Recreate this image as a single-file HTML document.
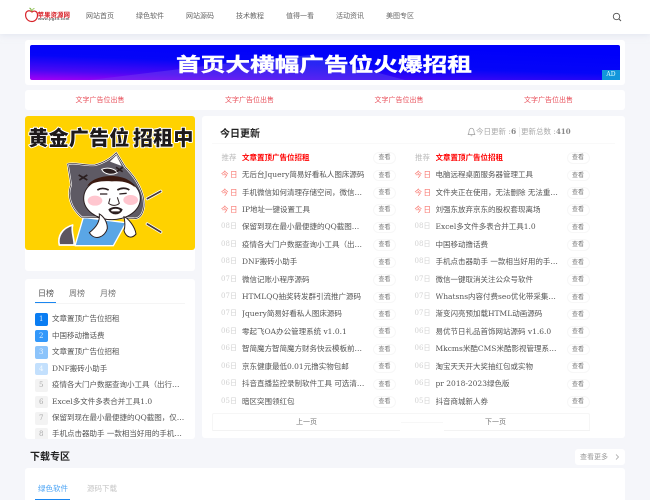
<!DOCTYPE html>
<html lang="zh">
<head>
<meta charset="utf-8">
<title>今日更新</title>
<style>
*{margin:0;padding:0;box-sizing:border-box}
html,body{width:650px;height:500px;overflow:hidden;background:#f5f6fa}
body{position:relative;font-family:"DejaVu Serif","WenQuanYi Zen Hei","Noto Sans CJK SC",serif;font-size:7.5px;color:#555}
.a{position:absolute;white-space:nowrap}
.card{position:absolute;background:#fff;border-radius:3px}
.nav{position:absolute;top:11px;width:28px;line-height:11px;font-size:7px;color:#666;white-space:nowrap}
.ad{position:absolute;top:95px;font-size:7px;line-height:10px;color:#e8505b;width:50px;text-align:center;white-space:nowrap}
.r{position:absolute;height:17.45px;width:180px;line-height:17px}
.r i{position:absolute;left:0;width:16px;text-align:center;font-style:normal;font-size:7px;color:#d2d2d2;white-space:nowrap}
.r i.t{color:#f8746c;letter-spacing:1.5px;font-size:7.5px}
.r i.p{color:#bbb;font-size:7.5px}
.r b{position:absolute;left:21px;width:124.500px;font-weight:400;font-size:7.5px;color:#555;white-space:nowrap;overflow:hidden;text-overflow:ellipsis}
.r b.h{color:#f00;font-weight:700}
.r u{position:absolute;left:152px;top:3.500px;width:23px;height:11.500px;border:1px solid #f7f7f7;border-radius:6px;text-align:center;text-decoration:none;font-size:6px;line-height:9.500px;color:#777;background:#fff}
.k{position:absolute;left:35px;width:150px;height:13px;line-height:12px;font-size:7.5px;color:#555}
.k em{position:absolute;left:0;top:0;width:12.5px;height:12.5px;border-radius:2px;text-align:center;font-style:normal;font-size:7px;line-height:12.5px;color:#aaa;background:#f3f3f3}
.k span{position:absolute;left:17px;width:133px;white-space:nowrap;overflow:hidden;text-overflow:ellipsis}
.s{position:absolute;top:127px;font-size:7.500px;line-height:10px;color:#aaa;white-space:nowrap}
</style>
</head>
<body>
<div class="a" style="left:0;top:0;width:650px;height:34px;background:#fff;box-shadow:0 1px 6px rgba(210,215,230,.55)"></div>
<svg class="a" style="left:24px;top:6px" width="16" height="17" viewBox="0 0 16 17"><path d="M8 6C5 3.500 1.600 5 1.600 9c0 4 3 6.500 6.200 6.500S13.500 13 13.500 9C13.500 5.500 10.500 4 8 6Z" fill="#fff" stroke="#d8232a" stroke-width="1.200"/><path d="M7.500 5.500C7.500 4 6.500 2.500 5.500 2" fill="none" stroke="#7cb342" stroke-width="1"/><path d="M8 5C8.500 3.500 9.500 2.500 10.500 2.500" fill="none" stroke="#9ccc65" stroke-width="1"/></svg>
<div class="a" style="left:37.500px;top:10px;font:700 6.500px/8px 'Noto Sans CJK SC',sans-serif;color:#d8232a">苹果资源网</div>
<div class="a" style="left:38px;top:16px;font:700 4px/5px 'Liberation Sans',sans-serif;color:#666;letter-spacing:.2px">www.pgzlt.com</div>
<div class="nav" style="left:86px">网站首页</div>
<div class="nav" style="left:136px">绿色软件</div>
<div class="nav" style="left:186px">网站源码</div>
<div class="nav" style="left:236px">技术教程</div>
<div class="nav" style="left:286px">值得一看</div>
<div class="nav" style="left:336px">活动资讯</div>
<div class="nav" style="left:386px">美图专区</div>
<svg class="a" style="left:612px;top:12px" width="10" height="10" viewBox="0 0 10 10"><circle cx="4.500" cy="4.500" r="3.200" fill="none" stroke="#555" stroke-width=".9"/><path d="M7 7L9 9" stroke="#555" stroke-width="1"/></svg>

<div class="card" style="left:25px;top:40px;width:600px;height:45px"></div>
<svg class="a" style="left:30px;top:45px;border-radius:2px" width="590" height="35" viewBox="0 0 590 35">
<defs><linearGradient id="g" x1="0" y1="1" x2=".55" y2="0"><stop offset="0" stop-color="#a400f4"/><stop offset=".22" stop-color="#4a08f4"/><stop offset=".55" stop-color="#0505f8"/><stop offset="1" stop-color="#0000fa"/></linearGradient>
<linearGradient id="g2" x1="0" y1="1" x2="1" y2="0"><stop offset="0" stop-color="#7a30f0" stop-opacity=".55"/><stop offset="1" stop-color="#3048f0" stop-opacity=".55"/></linearGradient></defs>
<rect width="590" height="35" fill="url(#g)"/>
<path d="M60 35L200 18L280 10L345 27L375 35Z" fill="url(#g2)"/>
</svg>
<div class="a" style="left:176px;top:52px;font:700 19px/23px 'Noto Sans CJK SC','Liberation Sans',sans-serif;color:#fff;transform-origin:0 0;transform:scaleX(1.298);-webkit-text-stroke:.4px #fff">首页大横幅广告位火爆招租</div>
<div class="a" style="left:602px;top:70px;width:18px;height:10px;background:#1296db;color:#dff;font-size:6px;line-height:10px;text-align:center">AD</div>

<div class="card" style="left:25px;top:90px;width:600px;height:20px"></div>
<div class="ad" style="left:75px">文字广告位出售</div>
<div class="ad" style="left:224.500px">文字广告位出售</div>
<div class="ad" style="left:374px">文字广告位出售</div>
<div class="ad" style="left:523.500px">文字广告位出售</div>

<div class="card" style="left:25px;top:116px;width:170px;height:155px"></div>
<svg class="a" style="left:25px;top:116px;border-radius:3px" width="170" height="134" viewBox="75 18 510 402">
<rect x="75" y="18" width="510" height="402" fill="#ffd200"/>
<g font-family="'Noto Sans CJK SC',sans-serif" font-weight="900" font-size="60" fill="#1e1a1a" stroke="#fff" stroke-width="6" paint-order="stroke" stroke-linejoin="round">
<text x="85" y="105" textLength="303">黄金广告位</text>
<text x="399" y="105" textLength="181">招租中</text>
</g>
<path d="M178 405C172 380 185 355 218 345C212 365 225 390 222 405Z" fill="#5c5660" stroke="#fff" stroke-width="5" stroke-linejoin="round"/>
<path d="M225 407L250 322L378 338L340 407Z" fill="#5aa6e6" stroke="#fff" stroke-width="4" stroke-linejoin="round"/>
<path d="M203 162C225 156 255 168 285 165C305 160 330 148 349 128L376 172C410 205 435 250 432 290C428 318 415 328 400 325L245 322C212 295 200 255 213 225Z" fill="#5e5a64" stroke="#fff" stroke-width="6" stroke-linejoin="round"/>
<path d="M203 162C225 156 255 168 285 165C305 160 330 148 349 128L376 172C410 205 435 250 432 290C428 318 415 328 400 325L245 322C212 295 200 255 213 225Z" fill="none" stroke="#2b1f20" stroke-width="2"/>
<path d="M330 155L349 136L365 168Z" fill="#fff"/>
<path d="M305 178C322 170 345 176 352 188C335 197 312 193 305 178Z" fill="#2b1f20" stroke="#fff" stroke-width="3"/>
<path d="M236 195L262 210M262 195L238 210M348 172L368 185M368 172L350 185" stroke="#2b1f20" stroke-width="5"/>
<ellipse cx="336" cy="265" rx="85" ry="64" fill="#fff" stroke="#2b1f20" stroke-width="3"/>
<path d="M262 228C282 190 385 185 405 232C380 212 358 213 335 214C305 212 285 215 262 228Z" fill="#3c1a10"/>
<ellipse cx="285" cy="272" rx="22" ry="15" fill="#ffc6cf"/>
<ellipse cx="392" cy="270" rx="22" ry="15" fill="#ffc6cf"/>
<path d="M292 240C305 232 318 236 326 240M352 240C362 234 378 232 388 240" stroke="#2b1f20" stroke-width="5" fill="none"/>
<path d="M300 252L322 252M358 252L380 250" stroke="#2b1f20" stroke-width="4"/>
<path d="M330 265L326 280C336 288 350 288 358 280L352 262" stroke="#2b1f20" stroke-width="3" fill="none"/>
<path d="M325 298C338 288 355 288 368 298C362 318 332 318 325 298Z" fill="#2b1f20"/>
<path d="M333 300C342 295 352 295 360 300L358 304L335 304Z" fill="#fff"/>
<path d="M268 368C290 350 300 335 298 312C310 318 322 335 322 355C316 380 285 395 268 368Z" fill="#fff" stroke="#2b1f20" stroke-width="3"/>
<path d="M372 320C385 325 405 350 408 372C395 388 378 382 372 362C376 350 375 335 372 320Z" fill="#fff" stroke="#2b1f20" stroke-width="3"/>
<path d="M442 266L482 244M442 342L482 366" stroke="#fff" stroke-width="10" stroke-linecap="round"/>
<path d="M442 266L482 244M442 342L482 366" stroke="#4a3a38" stroke-width="5" stroke-linecap="round"/>
</svg>

<div class="card" style="left:25px;top:278.500px;width:170px;height:160.500px;overflow:hidden">
<div class="a" style="left:13px;top:9px;font-size:8px;line-height:11px;color:#555">日榜</div>
<div class="a" style="left:44px;top:9px;font-size:8px;line-height:11px;color:#777">周榜</div>
<div class="a" style="left:75px;top:9px;font-size:8px;line-height:11px;color:#777">月榜</div>
<div class="a" style="left:10px;top:24px;width:150px;height:1px;background:#f5f5f5"></div>
<div class="a" style="left:10px;top:23.500px;width:21px;height:1px;background:#1a86f0"></div>
</div>
<div class="k" style="top:313px"><em style="background:#0a7df2;color:#cfe6ff">1</em><span>文章置顶广告位招租</span></div>
<div class="k" style="top:329.500px"><em style="background:#3398fa;color:#d8ecff">2</em><span>中国移动撸话费</span></div>
<div class="k" style="top:346px"><em style="background:#8cc4fb;color:#e6f2ff">3</em><span>文章置顶广告位招租</span></div>
<div class="k" style="top:362.500px"><em style="background:#c3e0fd;color:#f4faff">4</em><span>DNF搬砖小助手</span></div>
<div class="k" style="top:379px"><em>5</em><span>疫情各大门户数据查询小工具（出行防疫必备）</span></div>
<div class="k" style="top:395.500px"><em>6</em><span>Excel多文件多表合并工具1.0</span></div>
<div class="k" style="top:412px"><em>7</em><span>保留到现在最小最便捷的QQ截图，仅支持截图</span></div>
<div class="k" style="top:428px;height:11px;overflow:hidden"><em>8</em><span>手机点击器助手 一款相当好用的手机点击工具</span></div>

<div class="card" style="left:202px;top:116px;width:423px;height:322px"></div>
<div class="a" style="left:220px;top:126px;font-weight:700;font-size:10px;line-height:13px;color:#222;font-family:'WenQuanYi Zen Hei','Noto Sans CJK SC',sans-serif">今日更新</div>
<svg class="a" style="left:467px;top:127px" width="9" height="10" viewBox="0 0 9 10"><path d="M1.200 7.500C2 6.500 2 5.500 2 4.500C2 2.800 3 1.200 4.500 1.200S7 2.800 7 4.500C7 5.500 7 6.500 7.800 7.500ZM3.700 8.800H5.300" fill="none" stroke="#999" stroke-width=".7"/></svg>
<div class="s" style="left:476px">今日更新 :</div>
<div class="s" style="left:511px;color:#888;font-weight:700">6</div>
<div class="a" style="left:518.500px;top:127px;width:1px;height:10px;background:#eee"></div>
<div class="s" style="left:521px">更新总数 :</div>
<div class="s" style="left:556px;color:#888;font-weight:700;font-size:7px">410</div>
<div class="a" style="left:212px;top:143px;width:403px;height:1px;background:#f9f9f9"></div>

<div class="r" style="left:221px;top:148.500px"><i class="p">推荐</i><b class="h">文章置顶广告位招租</b><u>查看</u></div>
<div class="r" style="left:221px;top:166px"><i class="t">今日</i><b>无后台Jquery简易好看私人图床源码</b><u>查看</u></div>
<div class="r" style="left:221px;top:183.500px"><i class="t">今日</i><b>手机微信如何清理存储空间，微信清理工具</b><u>查看</u></div>
<div class="r" style="left:221px;top:200.900px"><i class="t">今日</i><b>IP地址一键设置工具</b><u>查看</u></div>
<div class="r" style="left:221px;top:218.300px"><i>08日</i><b>保留到现在最小最便捷的QQ截图工具</b><u>查看</u></div>
<div class="r" style="left:221px;top:235.700px"><i>08日</i><b>疫情各大门户数据查询小工具（出行防疫）</b><u>查看</u></div>
<div class="r" style="left:221px;top:253px"><i>08日</i><b>DNF搬砖小助手</b><u>查看</u></div>
<div class="r" style="left:221px;top:270.500px"><i>07日</i><b>微信记账小程序源码</b><u>查看</u></div>
<div class="r" style="left:221px;top:288px"><i>07日</i><b>HTMLQQ抽奖转发群引流推广源码</b><u>查看</u></div>
<div class="r" style="left:221px;top:305.400px"><i>07日</i><b>Jquery简易好看私人图床源码</b><u>查看</u></div>
<div class="r" style="left:221px;top:322.800px"><i>06日</i><b>零起飞OA办公管理系统 v1.0.1</b><u>查看</u></div>
<div class="r" style="left:221px;top:340.300px"><i>06日</i><b>智简魔方智简魔方财务快云模板前端源码</b><u>查看</u></div>
<div class="r" style="left:221px;top:357.700px"><i>06日</i><b>京东健康最低0.01元撸实物包邮</b><u>查看</u></div>
<div class="r" style="left:221px;top:375.100px"><i>06日</i><b>抖音直播监控录制软件工具 可选清晰度下载</b><u>查看</u></div>
<div class="r" style="left:221px;top:392.600px"><i>05日</i><b>暗区突围领红包</b><u>查看</u></div>

<div class="r" style="left:414.500px;top:148.500px"><i class="p">推荐</i><b class="h">文章置顶广告位招租</b><u>查看</u></div>
<div class="r" style="left:414.500px;top:166px"><i class="t">今日</i><b>电脑远程桌面服务器管理工具</b><u>查看</u></div>
<div class="r" style="left:414.500px;top:183.500px"><i class="t">今日</i><b>文件夹正在使用，无法删除 无法重命名工具</b><u>查看</u></div>
<div class="r" style="left:414.500px;top:200.900px"><i class="t">今日</i><b>刘强东放弃京东的股权套现离场</b><u>查看</u></div>
<div class="r" style="left:414.500px;top:218.300px"><i>08日</i><b>Excel多文件多表合并工具1.0</b><u>查看</u></div>
<div class="r" style="left:414.500px;top:235.700px"><i>08日</i><b>中国移动撸话费</b><u>查看</u></div>
<div class="r" style="left:414.500px;top:253px"><i>08日</i><b>手机点击器助手 一款相当好用的手机工具</b><u>查看</u></div>
<div class="r" style="left:414.500px;top:270.500px"><i>07日</i><b>微信一键取消关注公众号软件</b><u>查看</u></div>
<div class="r" style="left:414.500px;top:288px"><i>07日</i><b>Whatsns内容付费seo优化带采集和搜索</b><u>查看</u></div>
<div class="r" style="left:414.500px;top:305.400px"><i>07日</i><b>渐变闪亮预加载HTML动画源码</b><u>查看</u></div>
<div class="r" style="left:414.500px;top:322.800px"><i>06日</i><b>易优节日礼品首饰网站源码 v1.6.0</b><u>查看</u></div>
<div class="r" style="left:414.500px;top:340.300px"><i>06日</i><b>Mkcms米酷CMS米酷影视管理系统源码</b><u>查看</u></div>
<div class="r" style="left:414.500px;top:357.700px"><i>06日</i><b>淘宝天天开大奖抽红包或实物</b><u>查看</u></div>
<div class="r" style="left:414.500px;top:375.100px"><i>06日</i><b>pr 2018-2023绿色版</b><u>查看</u></div>
<div class="r" style="left:414.500px;top:392.600px"><i>05日</i><b>抖音商城新人券</b><u>查看</u></div>

<div class="a" style="left:212px;top:413px;width:378px;height:18px;border:1px solid #f6f6f6;border-bottom:0;border-radius:2px 2px 0 0"></div>
<div class="a" style="left:213px;top:430px;width:187px;height:1px;background:#f3f3f3"></div>
<div class="a" style="left:444px;top:430px;width:146px;height:1px;background:#f3f3f3"></div>
<div class="a" style="left:401px;top:421.500px;width:42px;height:1px;background:#f7f7f7"></div>
<div class="a" style="left:296px;top:417px;width:20px;text-align:center;font-size:7px;line-height:10px;color:#777">上一页</div>
<div class="a" style="left:485px;top:417px;width:20px;text-align:center;font-size:7px;line-height:10px;color:#777">下一页</div>

<div class="a" style="left:30px;top:449px;font-weight:700;font-size:10px;line-height:13px;color:#222;font-family:'WenQuanYi Zen Hei','Noto Sans CJK SC',sans-serif">下载专区</div>
<div class="card" style="left:575px;top:449px;width:50px;height:16px"></div>
<div class="a" style="left:580px;top:452px;font-size:7px;line-height:11px;color:#999">查看更多</div>
<svg class="a" style="left:614px;top:453px" width="6" height="8" viewBox="0 0 6 8"><path d="M2 1.500L4.500 4L2 6.500" fill="none" stroke="#999" stroke-width=".7"/></svg>
<div class="card" style="left:25px;top:468px;width:600px;height:40px"></div>
<div class="a" style="left:38px;top:484px;font-size:7.500px;line-height:10px;color:#4aa3f5">绿色软件</div>
<div class="a" style="left:87px;top:484px;font-size:7.500px;line-height:10px;color:#c6c6c6">源码下载</div>
<div class="a" style="left:35px;top:499px;width:35px;height:1px;background:#1a86f0"></div>
</body>
</html>
